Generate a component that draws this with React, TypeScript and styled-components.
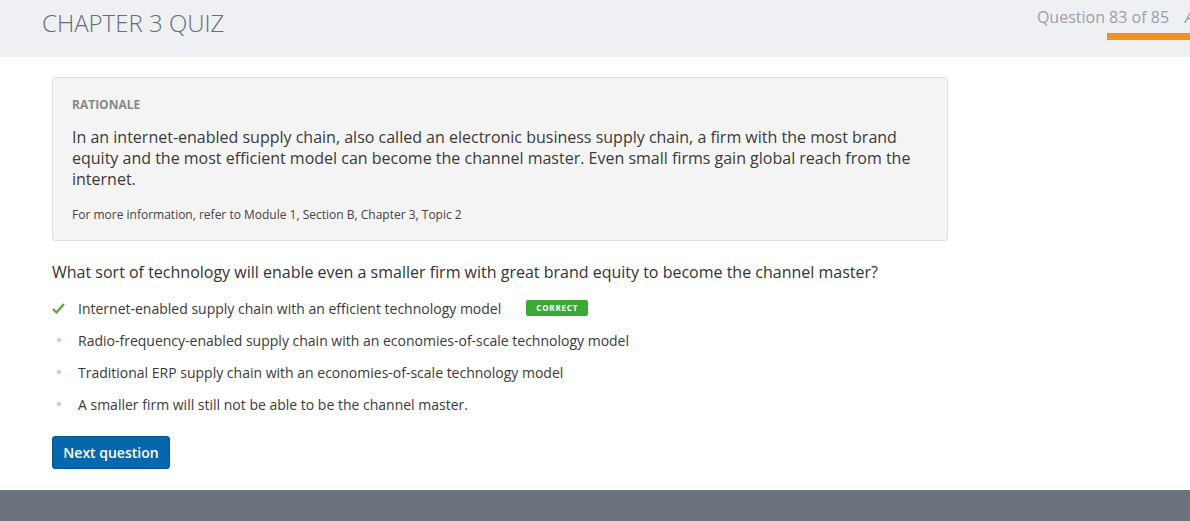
import styled, { createGlobalStyle } from "styled-components"

const GlobalStyle = createGlobalStyle`
  html, body {
    margin: 0;
    padding: 0;
    background: #fff;
    font-family: "Open Sans", "Liberation Sans", sans-serif;
  }
`

const options = [
  { text: "Internet-enabled supply chain with an efficient technology model", correct: true },
  { text: "Radio-frequency-enabled supply chain with an economies-of-scale technology model", correct: false },
  { text: "Traditional ERP supply chain with an economies-of-scale technology model", correct: false },
  { text: "A smaller firm will still not be able to be the channel master.", correct: false },
]

export default function App() {
  return (
    <Page>
      <GlobalStyle />
      <Header>
        <Title>CHAPTER 3 QUIZ</Title>
        <Progress>
          <Counter>
            Question 83 of 85<Cut>A</Cut>
          </Counter>
          <Bar />
        </Progress>
      </Header>
      <Main>
        <Rationale>
          <Label>RATIONALE</Label>
          <Body>
            In an internet-enabled supply chain, also called an electronic business supply chain, a firm with the most brand
            equity and the most efficient model can become the channel master. Even small firms gain global reach from the
            internet.
          </Body>
          <Ref>For more information, refer to Module 1, Section B, Chapter 3, Topic 2</Ref>
        </Rationale>
        <Question>
          What sort of technology will enable even a smaller firm with great brand equity to become the channel master?
        </Question>
        <Options>
          {options.map((o) => (
            <Option key={o.text}>
              <Marker>
                {o.correct ? (
                  <svg width="13" height="11" viewBox="0 0 13 11">
                    <path d="M1 6 L4.5 9.5 L12 1" fill="none" stroke="#5ea62e" strokeWidth="2.2" />
                  </svg>
                ) : (
                  <Diamond />
                )}
              </Marker>
              <span>{o.text}</span>
              {o.correct && <Badge>CORRECT</Badge>}
            </Option>
          ))}
        </Options>
        <NextButton>Next question</NextButton>
      </Main>
      <Footer />
    </Page>
  )
}

const Page = styled.div`
  width: 1190px;
  height: 521px;
  overflow: hidden;
  display: flex;
  flex-direction: column;
`
const Header = styled.div`
  height: 57px;
  background: #eff0f4;
  display: flex;
  justify-content: space-between;
  align-items: flex-start;
  flex-shrink: 0;
  overflow: hidden;
`
const Title = styled.h1`
  margin: 6px 0 0 42px;
  font-size: 24px;
  font-weight: 300;
  color: #646d78;
`
const Progress = styled.div`
  display: flex;
  flex-direction: column;
  align-items: flex-end;
  padding-top: 6px;
`
const Counter = styled.div`
  font-size: 16px;
  color: #9aa0a6;
  white-space: nowrap;
  margin-right: -4px;
`
const Cut = styled.span`
  font-style: italic;
  margin-left: 16px;
`
const Bar = styled.div`
  margin-top: 5px;
  width: 83px;
  height: 7px;
  background: #f39020;
`
const Main = styled.div`
  flex: 1;
  padding: 20px 0 0 52px;
`
const Rationale = styled.div`
  width: 855px;
  box-sizing: content-box;
  background: #f4f4f4;
  border: 1px solid #dedede;
  border-radius: 3px;
  padding: 18px 20px 16px 19px;
`
const Label = styled.div`
  font-size: 12px;
  font-weight: 700;
  color: #888;
  line-height: 18px;
`
const Body = styled.p`
  margin: 13px 0 0;
  font-size: 16px;
  line-height: 21px;
  color: #3a3a3a;
`
const Ref = styled.div`
  margin-top: 16px;
  font-size: 12px;
  color: #444;
  line-height: 18px;
`
const Question = styled.div`
  margin-top: 20px;
  font-size: 16px;
  color: #333;
  line-height: 22px;
`
const Options = styled.div`
  margin-top: 15px;
  display: flex;
  flex-direction: column;
  gap: 12px;
`
const Option = styled.div`
  display: flex;
  align-items: center;
  height: 20px;
  font-size: 14px;
  color: #3a3a3a;
`
const Marker = styled.div`
  width: 26px;
  display: flex;
  align-items: center;
`
const Diamond = styled.span`
  display: inline-block;
  width: 4px;
  height: 4px;
  margin-left: 5px;
  background: #d0d0d0;
  transform: rotate(45deg);
`
const Badge = styled.span`
  margin-left: 25px;
  background: #3aaa35;
  color: #fff;
  font-size: 8px;
  font-weight: 700;
  letter-spacing: 0.8px;
  border-radius: 2px;
  padding: 3px 10px;
  line-height: 10px;
`
const NextButton = styled.button`
  margin-top: 22px;
  background: #0568ae;
  color: #fff;
  border: 1px solid #04558d;
  border-radius: 3px;
  font-family: inherit;
  font-size: 14px;
  font-weight: 600;
  white-space: nowrap;
  padding: 0;
  height: 33px;
  width: 118px;
`
const Footer = styled.div`
  height: 31px;
  background: #6b747c;
  flex-shrink: 0;
`
